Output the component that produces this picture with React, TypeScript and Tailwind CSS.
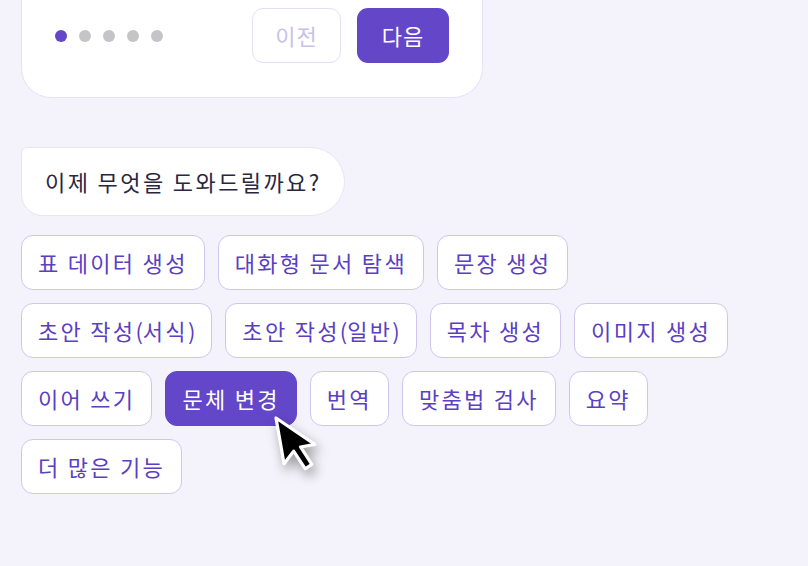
const chips = [
  "표 데이터 생성",
  "대화형 문서 탐색",
  "문장 생성",
  "초안 작성(서식)",
  "초안 작성(일반)",
  "목차 생성",
  "이미지 생성",
  "이어 쓰기",
  "문체 변경",
  "번역",
  "맞춤법 검사",
  "요약",
  "더 많은 기능",
]

const font = { fontFamily: '"Noto Sans CJK KR", "Noto Sans", sans-serif' }

// parentheses in Noto are wider than in the reference font
function Label({ text }: { text: string }) {
  const parts = text.split(/([()])/)
  return (
    <>
      {parts.map((p, i) =>
        p === "(" || p === ")" ? (
          <span key={i} className="tracking-[0px]">
            {p}
          </span>
        ) : (
          <span key={i}>{p}</span>
        )
      )}
    </>
  )
}

function Cursor() {
  return (
    <svg
      width="64"
      height="76"
      viewBox="0 0 64 76"
      className="absolute left-[105px] top-[43px] drop-shadow-[3px_6px_6px_rgba(0,0,0,0.35)]"
    >
      <g transform="translate(6,4) rotate(-10) scale(2.9)">
        <polygon
          points="0,0 0,16 4,12.3 6.9,19 9.4,17.9 6.6,11.3 11.6,11.3"
          fill="#000"
          stroke="#fff"
          strokeWidth="1.1"
          strokeLinejoin="round"
        />
      </g>
    </svg>
  )
}

export default function App() {
  return (
    <div className="min-h-[566px] bg-[#f4f2fa] px-[21px] overflow-hidden" style={font}>
      {/* step card, top edge off screen */}
      <div className="w-[462px] -mt-[61px] pt-[68px] pb-[34px] px-[33px] bg-white border border-[#e6e2f5] rounded-[30px] flex items-center">
        <div className="flex items-center gap-[12px]">
          <span className="w-[12px] h-[12px] rounded-full bg-[#6446c8]" />
          <span className="w-[12px] h-[12px] rounded-full bg-[#c4c4c6]" />
          <span className="w-[12px] h-[12px] rounded-full bg-[#c4c4c6]" />
          <span className="w-[12px] h-[12px] rounded-full bg-[#c4c4c6]" />
          <span className="w-[12px] h-[12px] rounded-full bg-[#c4c4c6]" />
        </div>
        <div className="ml-auto flex gap-[16px]">
          <button className="w-[89px] h-[55px] rounded-[11px] border-[1.5px] border-[#e4dff6] bg-white text-[22px] tracking-[1px] text-[#c8c1e8]">
            이전
          </button>
          <button className="w-[92px] h-[55px] rounded-[11px] bg-[#6446c8] text-[22px] tracking-[1px] text-white">
            다음
          </button>
        </div>
      </div>

      {/* assistant bubble */}
      <div className="mt-[49px] inline-flex h-[69px] items-center pl-[23px] pr-[22px] bg-white border border-[#e8e4f6] rounded-[6px_35px_35px_22px] text-[22px] tracking-[2.4px] text-[#2b2540]">
        이제 무엇을 도와드릴까요?
      </div>

      {/* quick actions */}
      <div className="mt-[19px] w-[745px] flex flex-wrap gap-x-[13px] gap-y-[13px]">
        {chips.map((c) =>
          c === "문체 변경" ? (
            <div key={c} className="relative">
              <button className="h-[55px] px-[16px] rounded-[12px] bg-[#6446c8] border-[1.5px] border-[#6446c8] text-[22px] tracking-[2.3px] text-white">
                {c}
              </button>
              <Cursor />
            </div>
          ) : (
            <button
              key={c}
              className="h-[55px] px-[16px] rounded-[12px] bg-white border-[1.5px] border-[#cfc5ef] text-[22px] tracking-[2.3px] text-[#5a3fc2]"
            >
              <Label text={c} />
            </button>
          )
        )}
      </div>
    </div>
  )
}
